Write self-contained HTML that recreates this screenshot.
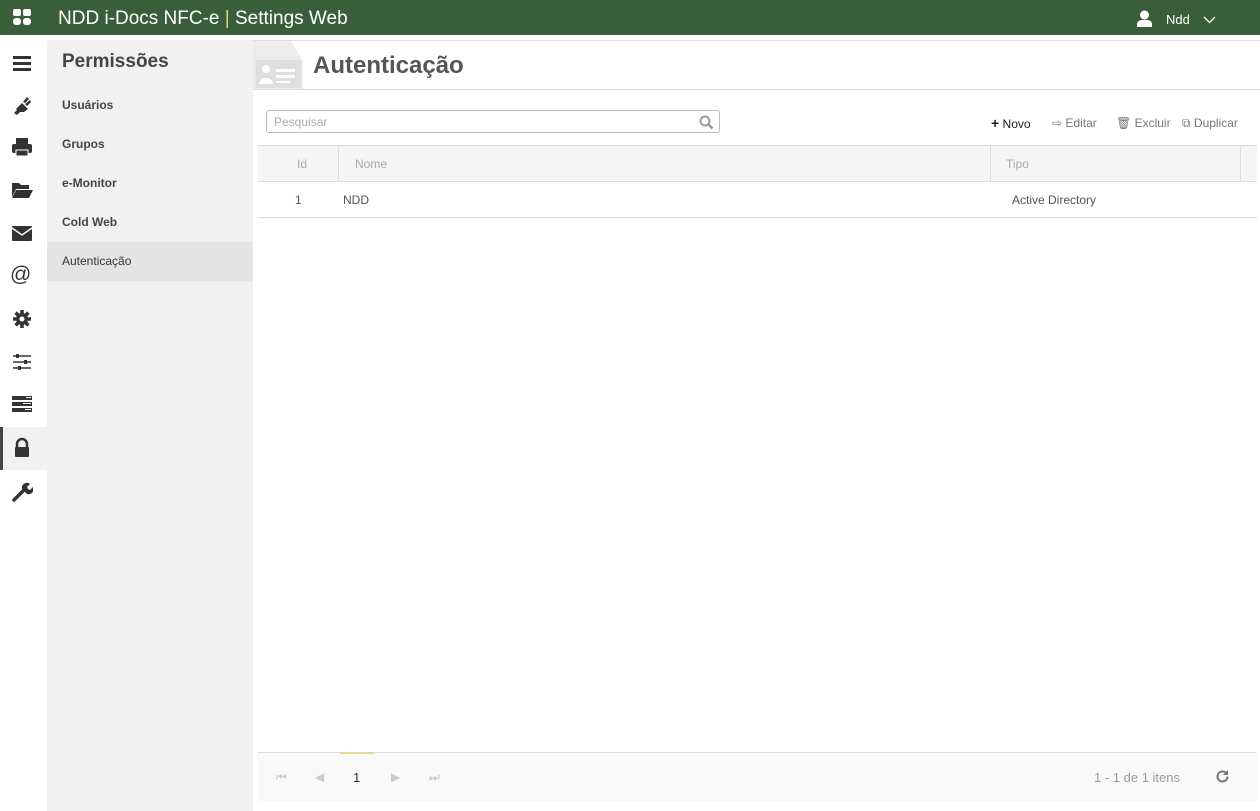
<!DOCTYPE html>
<html><head><meta charset="utf-8"><style>
*{margin:0;padding:0;box-sizing:border-box}
body{width:1260px;height:811px;overflow:hidden;font-family:"Liberation Sans",sans-serif;background:#fff;position:relative;color:#555}
.hdr{position:absolute;left:0;top:0;width:1260px;height:35px;background:#3b5e3a;color:#fff}
.abs{position:absolute}
.side{position:absolute;left:0;top:35px;width:47px;height:776px;background:#fff}
.nav{position:absolute;left:47px;top:40px;width:206px;height:771px;background:#f1f1f1}
.nav .it{height:39px;line-height:39px;padding-left:15px;font-size:12px;font-weight:bold;color:#444}
.ic{position:absolute;left:11px;width:22px;height:22px}
</style></head><body>
<div class="hdr">
<svg class="abs" style="left:13px;top:9px" width="19" height="17" viewBox="0 0 19 17" fill="#fff"><rect x="0" y="0" width="8" height="7" rx="2"/><rect x="10" y="0" width="8" height="7" rx="2"/><rect x="0" y="9" width="8" height="7" rx="3"/><rect x="10" y="9" width="8" height="7" rx="3"/></svg>
<div class="abs" style="left:58px;top:8px;font-size:19px;line-height:22px">NDD i-Docs NFC-e <span style="color:#e8d27a">|</span> Settings Web</div>
<svg class="abs" style="left:1137px;top:10px" width="15" height="17" viewBox="0 0 15 17" fill="#fff"><circle cx="7.5" cy="5" r="4.5"/><path d="M0 17v-3a5 4 0 0 1 5-4h5a5 4 0 0 1 5 4v3z"/></svg>
<div class="abs" style="left:1166px;top:12px;font-size:13px">Ndd</div>
<svg class="abs" style="left:1203px;top:16px" width="13" height="8" viewBox="0 0 13 8"><path d="M1 1l5.5 5.5L12 1" stroke="#fff" fill="none" stroke-width="1.3"/></svg>
</div>
<div class="abs" style="left:47px;top:40px;width:1213px;height:1px;background:#ddd"></div>
<div class="side">
<svg class="ic" style="top:17px" viewBox="0 0 22 22" fill="#333"><rect x="2" y="4" width="18" height="3"/><rect x="2" y="10" width="18" height="3"/><rect x="2" y="16" width="18" height="3"/></svg>
<svg class="ic" style="top:58px" viewBox="0 0 22 22" fill="#333"><path d="M3 20l3-3-1-1 6-6 6 6-4 3-4 0-3 3z"/><path d="M12 9l4-5 2 2-4 4zM14 11l5-4 1 2-4 4z"/></svg>
<svg class="ic" style="top:101px" viewBox="0 0 22 22" fill="#333"><rect x="5" y="2" width="12" height="6"/><rect x="1" y="8" width="20" height="9" rx="2"/><rect x="5" y="14" width="12" height="6" fill="#333" stroke="#fff"/></svg>
<svg class="ic" style="top:144px" viewBox="0 0 22 22" fill="#333"><path d="M1 4h7l2 2h8v4H5l-4 8z"/><path d="M5 11h17l-4 8H1z"/></svg>
<svg class="ic" style="top:187px" viewBox="0 0 22 22" fill="#333"><rect x="1" y="4" width="20" height="15" rx="1"/><path d="M1 6l10 7 10-7" stroke="#fff" stroke-width="1.5" fill="none"/></svg>
<div class="abs" style="left:10px;top:228px;font-size:21px;color:#333">@</div>
<svg class="ic" style="top:273px" viewBox="0 0 22 22" fill="#333"><circle cx="11" cy="11" r="6"/><g stroke="#333" stroke-width="3.5"><path d="M11 2v18M2 11h18M4.6 4.6l12.8 12.8M17.4 4.6L4.6 17.4"/></g><circle cx="11" cy="11" r="2.5" fill="#fff"/></svg>
<svg class="ic" style="top:316px" viewBox="0 0 22 22"><g stroke="#333" stroke-width="1.5"><path d="M2 5h18M2 11h18M2 17h18"/></g><g fill="#333"><rect x="5" y="3" width="3" height="4"/><rect x="13" y="9" width="3" height="4"/><rect x="7" y="15" width="3" height="4"/></g></svg>
<svg class="ic" style="top:358px" viewBox="0 0 22 22" fill="#333"><rect x="1" y="3" width="20" height="4"/><rect x="1" y="9" width="20" height="4"/><rect x="1" y="15" width="20" height="4"/><g fill="#fff"><rect x="15" y="4" width="5" height="1"/><rect x="12" y="10" width="8" height="1"/><rect x="14" y="16" width="6" height="1"/></g></svg>
<div class="abs" style="left:0;top:392px;width:47px;height:43px;background:#f1f1f1;border-left:3px solid #444"></div>
<svg class="ic" style="top:402px" viewBox="0 0 22 22" fill="#333"><path d="M6 10V7a5 5 0 0 1 10 0v3" stroke="#333" stroke-width="2.5" fill="none"/><rect x="4" y="10" width="14" height="10" rx="1"/></svg>
<svg class="ic" style="top:446px" viewBox="0 0 22 22" fill="#333"><path d="M3 19l9-9" stroke="#333" stroke-width="3.5" stroke-linecap="round"/><path d="M11 8a5 5 0 0 1 8-5l-3 3 1 2 2 1 3-3a5 5 0 0 1-6 7z"/></svg>
</div>
<div class="nav">
<div style="height:46px;padding:11px 0 0 15px;font-size:19px;font-weight:bold;color:#444">Permissões</div>
<div class="it">Usuários</div><div class="it">Grupos</div><div class="it">e-Monitor</div><div class="it">Cold Web</div>
<div class="it" style="background:#e4e4e4;font-weight:normal;color:#333">Autenticação</div>
</div>
<svg class="abs" style="left:253px;top:41px" width="50" height="48" viewBox="0 0 50 48"><path d="M0 0h38l12 20v28H0z" fill="#ececec"/><rect x="3" y="19" width="45" height="28" fill="#e0dede"/><circle cx="13" cy="28" r="4" fill="#fff"/><path d="M6 43a7 6 0 0 1 14 0z" fill="#fff"/><rect x="23" y="28" width="19" height="3" fill="#fff"/><rect x="23" y="34" width="19" height="3" fill="#fff"/><rect x="23" y="40" width="14" height="2" fill="#fff"/></svg>
<div class="abs" style="left:313px;top:52px;font-size:24px;font-weight:bold;color:#555">Autenticação</div>
<div class="abs" style="left:253px;top:89px;width:1007px;height:1px;background:#ddd"></div>
<div class="abs" style="left:266px;top:110px;width:454px;height:23px;border:1px solid #bbb;border-radius:3px;font-size:12px;color:#aaa;padding:4px 7px">Pesquisar</div>
<svg class="abs" style="left:699px;top:115px" width="15" height="15" viewBox="0 0 15 15"><circle cx="6" cy="6" r="4.5" stroke="#999" stroke-width="2" fill="none"/><path d="M9.5 9.5l4 4" stroke="#999" stroke-width="2.5"/></svg>
<div class="abs" style="left:991px;top:115px;font-size:12px;color:#222"><b style="font-size:14px">+</b> Novo</div>
<div class="abs" style="left:1052px;top:116px;font-size:12px;color:#777">⇨ Editar</div>
<div class="abs" style="left:1116px;top:116px;font-size:12px;color:#777">🗑 Excluir</div>
<div class="abs" style="left:1182px;top:116px;font-size:12px;color:#777">⧉ Duplicar</div>
<div class="abs" style="left:258px;top:145px;width:999px;height:37px;background:#f5f5f5;border-top:1px solid #ddd;border-bottom:1px solid #ddd"></div>
<div class="abs" style="left:338px;top:146px;width:1px;height:35px;background:#ddd"></div>
<div class="abs" style="left:990px;top:146px;width:1px;height:35px;background:#ddd"></div>
<div class="abs" style="left:1240px;top:146px;width:1px;height:35px;background:#ddd"></div>
<div class="abs" style="left:297px;top:157px;font-size:12px;color:#aaa">Id</div>
<div class="abs" style="left:355px;top:157px;font-size:12px;color:#aaa">Nome</div>
<div class="abs" style="left:1006px;top:157px;font-size:12px;color:#aaa">Tipo</div>
<div class="abs" style="left:295px;top:193px;font-size:12px;color:#7a4a3a">1</div>
<div class="abs" style="left:343px;top:193px;font-size:12px;color:#555">NDD</div>
<div class="abs" style="left:1012px;top:193px;font-size:12px;color:#555">Active Directory</div>
<div class="abs" style="left:258px;top:217px;width:999px;height:1px;background:#ddd"></div>
<div class="abs" style="left:258px;top:752px;width:999px;height:49px;background:#f9f9f9;border-top:1px solid #ddd"></div>
<div class="abs" style="left:340px;top:752px;width:34px;height:2px;background:#e8d890"></div>
<div class="abs" style="left:276px;top:770px;font-size:12px;color:#ccc;letter-spacing:0">⏮</div>
<div class="abs" style="left:315px;top:770px;font-size:12px;color:#ccc">◀</div>
<div class="abs" style="left:353px;top:770px;font-size:13px;color:#333">1</div>
<div class="abs" style="left:391px;top:770px;font-size:12px;color:#ccc">▶</div>
<div class="abs" style="left:429px;top:770px;font-size:12px;color:#ccc">⏭</div>
<div class="abs" style="left:1094px;top:770px;font-size:13px;color:#999">1 - 1 de 1 itens</div>
<svg class="abs" style="left:1215px;top:769px" width="15" height="15" viewBox="0 0 15 15"><path d="M12.5 7.5a5 5 0 1 1-1.5-3.6" stroke="#777" stroke-width="2" fill="none"/><path d="M13 1v5h-5z" fill="#777"/></svg>
</body></html>
